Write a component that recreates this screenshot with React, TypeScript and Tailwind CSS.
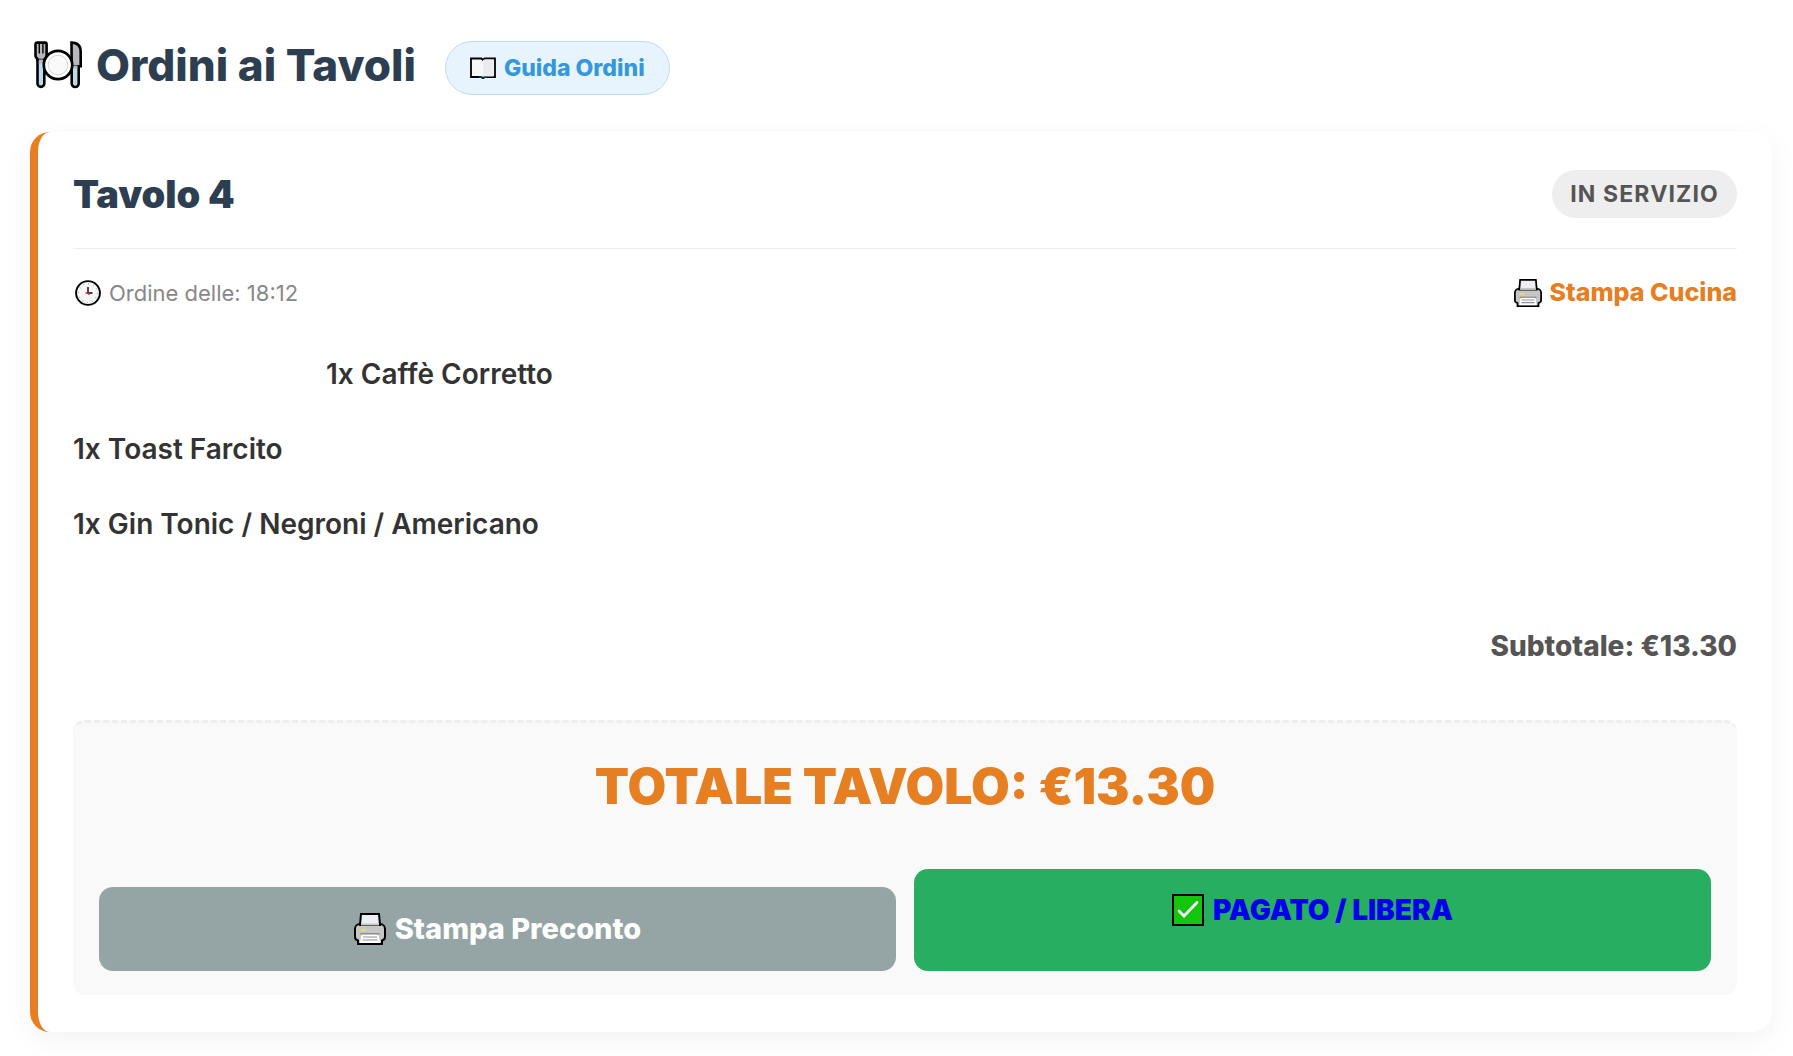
import React from "react";

type IconProps = { className?: string };

const PlateIcon: React.FC<IconProps> = ({ className }) => (
    <svg viewBox="0 0 48 48" className={className} aria-hidden="true">
        <path d="M3.500 17h6.800v25.500a3.400 3.400 0 0 1-6.800 0z" fill="#b9dcec" stroke="#000" strokeWidth="2.600" />
        <path d="M3.200 1.600h7.800a1.600 1.600 0 0 1 1.600 1.600V15c0 2-2.200 2.500-2.300 4H3.800c0-1.500-2.300-2-2.300-4V3.200a1.600 1.600 0 0 1 1.700-1.600z" fill="#b8b8bc" stroke="#000" strokeWidth="2.600" />
        <path d="M5.300 2v10.500M8.900 2v10.500" stroke="#000" strokeWidth="1.400" />
        <path d="M4.800 18.500h4.200v4H4.800z" fill="#b8b8bc" />
        <path d="M37.700 22h7v20.500a3.500 3.500 0 0 1-7 0z" fill="#b9dcec" stroke="#000" strokeWidth="2.600" />
        <path d="M37.500 1.600c5.500 0 9.200 3 9.200 9.400v14.300h-9z" fill="#b8b8bc" stroke="#000" strokeWidth="2.600" />
        <path d="M39 24.500h4.500v3H39z" fill="#b8b8bc" />
        <circle cx="24" cy="24" r="14.200" fill="#fff" stroke="#000" strokeWidth="2.700" />
        <circle cx="24" cy="24" r="9.800" fill="#fafafa" stroke="#d5d5d5" strokeWidth="1" />
    </svg>
);

const BookIcon: React.FC<IconProps> = ({ className }) => (
    <svg viewBox="0 0 26 22" className={className} aria-hidden="true">
        <path d="M1 1.500h10.500L13 3l1.500-1.500H25V20H15l-2 1.200L11 20H1z" fill="#f7f7f7" stroke="#000" strokeWidth="1.800" />
        <path d="M13 3v16.500h10.500V2.500H15z" fill="#e9ebed" />
        <path d="M9 20h8" stroke="#1c6b94" strokeWidth="1" />
    </svg>
);

const ClockIcon: React.FC<IconProps> = ({ className }) => (
    <svg viewBox="0 0 26 26" className={className} aria-hidden="true">
        <circle cx="13" cy="13" r="11.900" fill="#f6f6f6" stroke="#000" strokeWidth="1.900" />
        <circle cx="13" cy="13" r="9.400" fill="none" stroke="#999" strokeWidth="1.400" strokeDasharray="0.700 4.220" />
        <path d="M13 7v6h4.500" fill="none" stroke="#000" strokeWidth="1.400" />
        <path d="M10.500 13H14v2" fill="none" stroke="#d3204a" strokeWidth="1.300" />
    </svg>
);

const PrinterIcon: React.FC<IconProps> = ({ className }) => (
    <svg viewBox="0 0 32 32" className={className} aria-hidden="true">
        <path d="M6 11h20c2.800 0 5 2.200 5 5v8c0 2-1 3-3 3.500V31H4v-3.500C2 27 1 26 1 24v-8c0-2.800 2.200-5 5-5z" fill="#c6c6c6" stroke="#000" strokeWidth="2" />
        <path d="M7 1h18l1 11H6z" fill="#eeeff2" stroke="#000" strokeWidth="2" />
        <path d="M7 11.500h18" stroke="#c6c6c6" strokeWidth="2" />
        <path d="M6.500 17.200H12" stroke="#e8e64a" strokeWidth="1.800" />
        <path d="M6.500 21h19" stroke="#777" strokeWidth="1.500" />
        <path d="M7.500 21.500h17L26 30H6z" fill="#fff" />
        <path d="M9 24h14M8.500 27h15" stroke="#8e8e98" strokeWidth="1.200" />
    </svg>
);

const CheckIcon: React.FC<IconProps> = ({ className }) => (
    <svg viewBox="0 0 32 32" className={className} aria-hidden="true">
        <rect x="1" y="1" width="30" height="30" fill="#13c60d" stroke="#000" strokeWidth="2" />
        <path d="M7 17l5 5L25 8.500" fill="none" stroke="#fff" strokeWidth="2.700" strokeLinecap="round" />
    </svg>
);

const items = [
    { qty: 1, name: "Caffè Corretto", indent: true },
    { qty: 1, name: "Toast Farcito", indent: false },
    { qty: 1, name: "Gin Tonic / Negroni / Americano", indent: false },
];

const App: React.FC = () => {
    return (
        <main className="bg-white pt-[41px] pr-[21px] pb-6 pl-[30px] font-['Inter',sans-serif]">
            <header className="flex items-start">
                <h1 className="flex items-center gap-[14px] pl-1 text-[44px] leading-[48px] font-extrabold text-[#2c3e50]">
                    <PlateIcon className="size-12" />
                    Ordini ai Tavoli
                </h1>
                <button className="ml-[29px] flex h-[54px] items-center gap-2 rounded-full border border-[#bddcf3] bg-[#e8f4fd] px-6 text-[23px] font-extrabold text-[#3498db]">
                    <BookIcon className="h-[22px] w-[26px]" />
                    Guida Ordini
                </button>
            </header>

            <section className="mt-[37px] rounded-[20px] border-l-8 border-[#e67e22] bg-white px-[35px] pt-[38px] pb-[37px] shadow-[0_8px_30px_rgba(0,0,0,0.05)]">
                <div className="flex items-center justify-between border-b border-[#eeeeee] pb-[30px]">
                    <h2 className="text-[38px] leading-[48px] font-black text-[#2c3e50]">Tavolo 4</h2>
                    <span className="rounded-full bg-[#eeeeee] px-[18px] text-[23px] leading-[48px] font-bold tracking-wider text-[#555555]">
                        IN SERVIZIO
                    </span>
                </div>

                <div className="mt-6 flex h-10 items-center justify-between">
                    <p className="flex items-center gap-2 pl-[2px] text-[22px] text-[#888888]">
                        <ClockIcon className="size-[26px]" />
                        Ordine delle: 18:12
                    </p>
                    <button className="flex items-center gap-2 text-[25px] font-extrabold text-[#e67e22]">
                        <PrinterIcon className="size-7" />
                        Stampa Cucina
                    </button>
                </div>

                <ul className="mt-6 text-[28px] leading-[35px] font-semibold text-[#333333]">
                    {items.map((item) => (
                        <li key={item.name} className={item.indent ? "py-5 pl-[253px]" : "py-5"}>
                            {item.qty}x {item.name}
                        </li>
                    ))}
                </ul>

                <p className="mt-[62px] text-right text-[28px] leading-[44px] font-extrabold text-[#555555]">
                    Subtotale: €13.30
                </p>

                <div className="mt-[52px] rounded-xl border-t-3 border-dashed border-[#eeeeee] bg-[#f9f9f9] px-[26px] pt-[33px] pb-6">
                    <p className="text-center text-[50px] leading-[60px] font-black text-[#e67e22]">
                        TOTALE TAVOLO: €13.30
                    </p>
                    <div className="mt-[53px] grid grid-cols-2 items-end gap-[18px] text-[28px] leading-8">
                        <button className="flex h-[84px] items-center justify-center gap-[9px] rounded-[14px] bg-[#95a5a6] text-[29px] font-extrabold text-white">
                            <PrinterIcon className="size-8" />
                            Stampa Preconto
                        </button>
                        <a
                            href="#libera"
                            className="flex justify-center gap-[9px] rounded-[14px] bg-[#27ae60] pt-[25px] pb-[45px] font-black text-[#0000ee]"
                        >
                            <CheckIcon className="size-8" />
                            PAGATO / LIBERA
                        </a>
                    </div>
                </div>
            </section>
        </main>
    );
};

export default App;
